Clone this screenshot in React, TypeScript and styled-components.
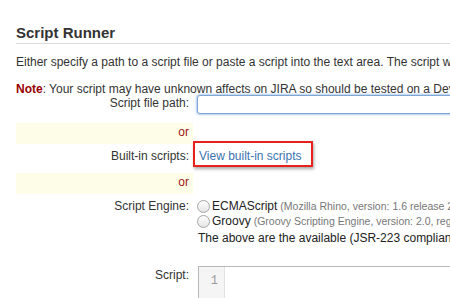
import React from 'react'
import styled, { createGlobalStyle } from 'styled-components'

const GlobalStyle = createGlobalStyle`
  html, body {
    margin: 0;
    padding: 0;
    background: #fff;
    overflow: hidden;
  }
  body {
    font-family: "Liberation Sans", Arial, sans-serif;
    font-size: 12px;
    color: #333;
  }
`

const Page = styled.div`
  width: 450px;
  height: 298px;
  overflow: hidden;
  box-sizing: border-box;
  padding: 24px 0 0 16px;
`

const Title = styled.h2`
  margin: 0;
  padding-bottom: 1px;
  font-size: 15px;
  line-height: 18px;
  font-weight: bold;
  color: #333;
  border-bottom: 1px solid #dcdcdc;
  white-space: nowrap;
`

const Paragraph = styled.p<{ $gap: number }>`
  margin: ${({ $gap }) => $gap}px 0 0;
  line-height: 12px;
  white-space: nowrap;
`

const NoteLabel = styled.strong`
  color: #990000;
`

const Form = styled.div`
  display: flex;
  flex-direction: column;
`

const FieldRow = styled.div<{ $top?: number; $height?: number }>`
  display: flex;
  align-items: flex-start;
  margin-top: ${({ $top }) => $top ?? 0}px;
  height: ${({ $height }) => ($height ? `${$height}px` : 'auto')};
`

const Label = styled.div<{ $pad?: number }>`
  flex: 0 0 177px;
  box-sizing: border-box;
  padding: ${({ $pad }) => $pad ?? 0}px 4px 0 0;
  text-align: right;
  line-height: 14px;
  white-space: nowrap;
`

const Field = styled.div<{ $pad?: number }>`
  flex: 1;
  min-width: 0;
  padding: ${({ $pad }) => $pad ?? 0}px 0 0 4px;
  white-space: nowrap;
`

const TextInput = styled.input`
  display: block;
  box-sizing: border-box;
  width: 320px;
  height: 19px;
  margin: 0;
  border: 1px solid #7ea7d8;
  border-radius: 3px;
  box-shadow: 0 0 2px 1px rgba(110, 160, 220, 0.55);
  outline: none;
  background: #fff;
`

const OrRow = styled.div<{ $top: number }>`
  width: 177px;
  box-sizing: border-box;
  margin-top: ${({ $top }) => $top}px;
  padding: 2px 4px 5px 0;
  background: #fefee8;
  text-align: right;
  line-height: 14px;
  color: #a01515;
`

const LinkWrap = styled.span`
  position: relative;
  display: inline-block;
  margin-left: 2px;
  line-height: 14px;
`

const Link = styled.a`
  color: #3b73af;
  text-decoration: none;
`

const Highlight = styled.span`
  position: absolute;
  left: -6px;
  top: -8px;
  width: 120px;
  height: 26px;
  box-sizing: border-box;
  border: 2px solid #e8211b;
  box-shadow: 1px 2px 3px rgba(0, 0, 0, 0.35);
  pointer-events: none;
`

const RadioLine = styled.label`
  display: flex;
  align-items: center;
  height: 15px;
  line-height: 15px;
`

const Radio = styled.span`
  flex: 0 0 auto;
  width: 13px;
  height: 13px;
  box-sizing: border-box;
  margin: 0 2px 0 0;
  border: 1px solid #a5a5a5;
  border-radius: 50%;
  background: linear-gradient(#ffffff, #e4e4e4);
`

const EngineName = styled.span`
  color: #222;
`

const EngineInfo = styled.span`
  margin-left: 3px;
  font-size: 10.5px;
  color: #777;
`

const Hint = styled.div`
  margin: 1px 0 0 1px;
  line-height: 16px;
  color: #222;
`

const Editor = styled.div`
  display: flex;
  width: 300px;
  height: 60px;
  margin-left: 1px;
  border: 1px solid #b8b8b8;
  border-right: none;
`

const Gutter = styled.div`
  width: 26px;
  box-sizing: border-box;
  padding: 6px 6px 0 0;
  background: #f5f5f5;
  border-right: 1px solid #e2e2e2;
  text-align: right;
  font-family: "Liberation Mono", "Courier New", monospace;
  font-size: 12px;
  line-height: 16px;
  color: #999;
`

const Code = styled.div`
  flex: 1;
  background: #fff;
`

const engines = [
  { name: 'ECMAScript', info: '(Mozilla Rhino, version: 1.6 release 2)' },
  { name: 'Groovy', info: '(Groovy Scripting Engine, version: 2.0, registered)' },
]

export default function App() {
  return (
    <>
      <GlobalStyle />
      <Page>
        <Title>Script Runner</Title>
        <Paragraph $gap={12}>
          Either specify a path to a script file or paste a script into the text area. The script will be executed.
        </Paragraph>
        <Paragraph $gap={15}>
          <NoteLabel>Note</NoteLabel>: Your script may have unknown affects on JIRA so should be tested on a Dev server first.
        </Paragraph>
        <Form>
          <FieldRow $height={19}>
            <Label $pad={1}>Script file path:</Label>
            <Field>
              <TextInput type="text" />
            </Field>
          </FieldRow>
          <OrRow $top={9}>or</OrRow>
          <FieldRow $height={29}>
            <Label $pad={5}>Built-in scripts:</Label>
            <Field $pad={5}>
              <LinkWrap>
                <Link href="#">View built-in scripts</Link>
                <Highlight />
              </LinkWrap>
            </Field>
          </FieldRow>
          <OrRow $top={0}>or</OrRow>
          <FieldRow $top={5}>
            <Label $pad={0}>Script Engine:</Label>
            <Field>
              {engines.map((e) => (
                <RadioLine key={e.name}>
                  <Radio />
                  <EngineName>{e.name}</EngineName>
                  <EngineInfo>{e.info}</EngineInfo>
                </RadioLine>
              ))}
              <Hint>The above are the available (JSR-223 compliant) script engines.</Hint>
            </Field>
          </FieldRow>
          <FieldRow $top={20}>
            <Label $pad={2}>Script:</Label>
            <Field>
              <Editor>
                <Gutter>1</Gutter>
                <Code />
              </Editor>
            </Field>
          </FieldRow>
        </Form>
      </Page>
    </>
  )
}
